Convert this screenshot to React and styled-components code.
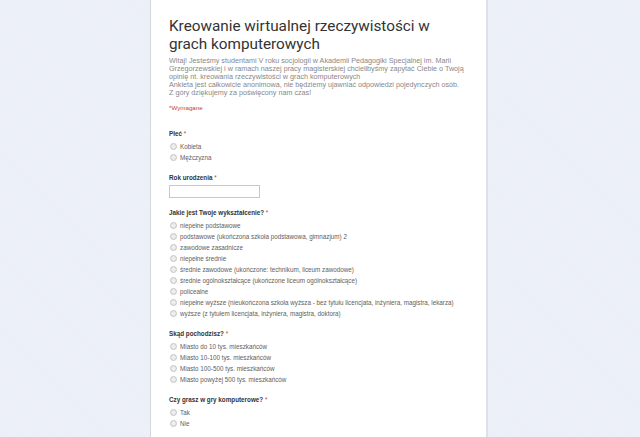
import React from "react";
import styled, { createGlobalStyle } from "styled-components";

const Global = createGlobalStyle`
  html, body { margin: 0; padding: 0; }
  body {
    background-color: #ebeff7;
    background-image: repeating-linear-gradient(45deg, rgba(255,255,255,0.1) 0 1px, transparent 1px 3px);
    font-family: "Liberation Sans", Arial, sans-serif;
    overflow: hidden;
  }
`;

const Page = styled.div`
  height: 437px;
  display: flex;
  padding-left: 150px;
  overflow: hidden;
`;

const Card = styled.main`
  width: 298px;
  background: #fff;
  border-left: 1px solid #d3d7de;
  border-right: 2px solid #dde1e8;
  padding: 17px 19px 0 18px;
  box-sizing: content-box;
`;

const Title = styled.h1`
  margin: 0;
  font-family: Roboto, "Liberation Sans", sans-serif;
  font-weight: 400;
  font-size: 15.3px;
  line-height: 18px;
  color: #333;
`;

const Description = styled.p`
  margin: 4px 0 0;
  font-size: 7.2px;
  line-height: 8px;
  color: #888;
  white-space: pre-line;
`;

const Required = styled.div`
  margin: 7px 0 0;
  font-size: 6.2px;
  line-height: 8px;
  color: #c4442a;
`;

const Questions = styled.div`
  display: flex;
  flex-direction: column;
  gap: ${(p) => p.$gap}px;
  margin-top: 16px;
`;

const Question = styled.section`
  display: flex;
  flex-direction: column;
`;

const Label = styled.div`
  font-size: 6.3px;
  font-weight: 700;
  line-height: 12px;
  margin-bottom: 1px;
  color: #333;
`;

const Star = styled.span`
  color: #c4442a;
  font-weight: 400;
`;

const Option = styled.label`
  display: flex;
  align-items: center;
  height: 11px;
  font-size: 6.3px;
  color: #606060;
  gap: 3px;
  white-space: nowrap;
`;

const Radio = styled.span`
  width: 5px;
  height: 5px;
  margin-left: 1px;
  border-radius: 50%;
  border: 1px solid #c4c4c4;
  background: radial-gradient(circle, #f2f2f2 0, #e2e2e2 100%);
  flex: none;
`;

const TextInput = styled.div`
  width: 89px;
  height: 11px;
  border: 1px solid #c8c8c8;
  background: #fff;
`;

const questions = [
  { label: "Płeć", options: ["Kobieta", "Mężczyzna"] },
  { label: "Rok urodzenia", input: true },
  {
    label: "Jakie jest Twoje wykształcenie?",
    options: [
      "niepełne podstawowe",
      "podstawowe (ukończona szkoła podstawowa, gimnazjum) 2",
      "zawodowe zasadnicze",
      "niepełne średnie",
      "średnie zawodowe (ukończone: technikum, liceum zawodowe)",
      "średnie ogólnokształcące (ukończone liceum ogólnokształcące)",
      "policealne",
      "niepełne wyższe (nieukończona szkoła wyższa - bez tytułu licencjata, inżyniera, magistra, lekarza)",
      "wyższe (z tytułem licencjata, inżyniera, magistra, doktora)",
    ],
  },
  {
    label: "Skąd pochodzisz?",
    options: [
      "Miasto do 10 tys. mieszkańców",
      "Miasto 10-100 tys. mieszkańców",
      "Miasto 100-500 tys. mieszkańców",
      "Miasto powyżej 500 tys. mieszkańców",
    ],
  },
  { label: "Czy grasz w gry komputerowe?", options: ["Tak", "Nie"] },
];

const description = `Witaj! Jesteśmy studentami V roku socjologii w Akademii Pedagogiki Specjalnej im. Marii
Grzegorzewskiej i w ramach naszej pracy magisterskiej chcielibyśmy zapytać Ciebie o Twoją
opinię nt. kreowania rzeczywistości w grach komputerowych
Ankieta jest całkowicie anonimowa, nie będziemy ujawniać odpowiedzi pojedynczych osób.
Z góry dziękujemy za poświęcony nam czas!`;

export default function App() {
  return (
    <>
      <Global />
      <Page>
        <Card>
          <Title>
            Kreowanie wirtualnej rzeczywistości w
            <br />
            grach komputerowych
          </Title>
          <Description>{description}</Description>
          <Required>*Wymagane</Required>
          <Questions $gap={9}>
            {questions.map((q) => (
              <Question key={q.label}>
                <Label>
                  {q.label} <Star>*</Star>
                </Label>
                {q.input ? (
                  <TextInput />
                ) : (
                  q.options.map((o) => (
                    <Option key={o}>
                      <Radio />
                      {o}
                    </Option>
                  ))
                )}
              </Question>
            ))}
          </Questions>
        </Card>
      </Page>
    </>
  );
}
